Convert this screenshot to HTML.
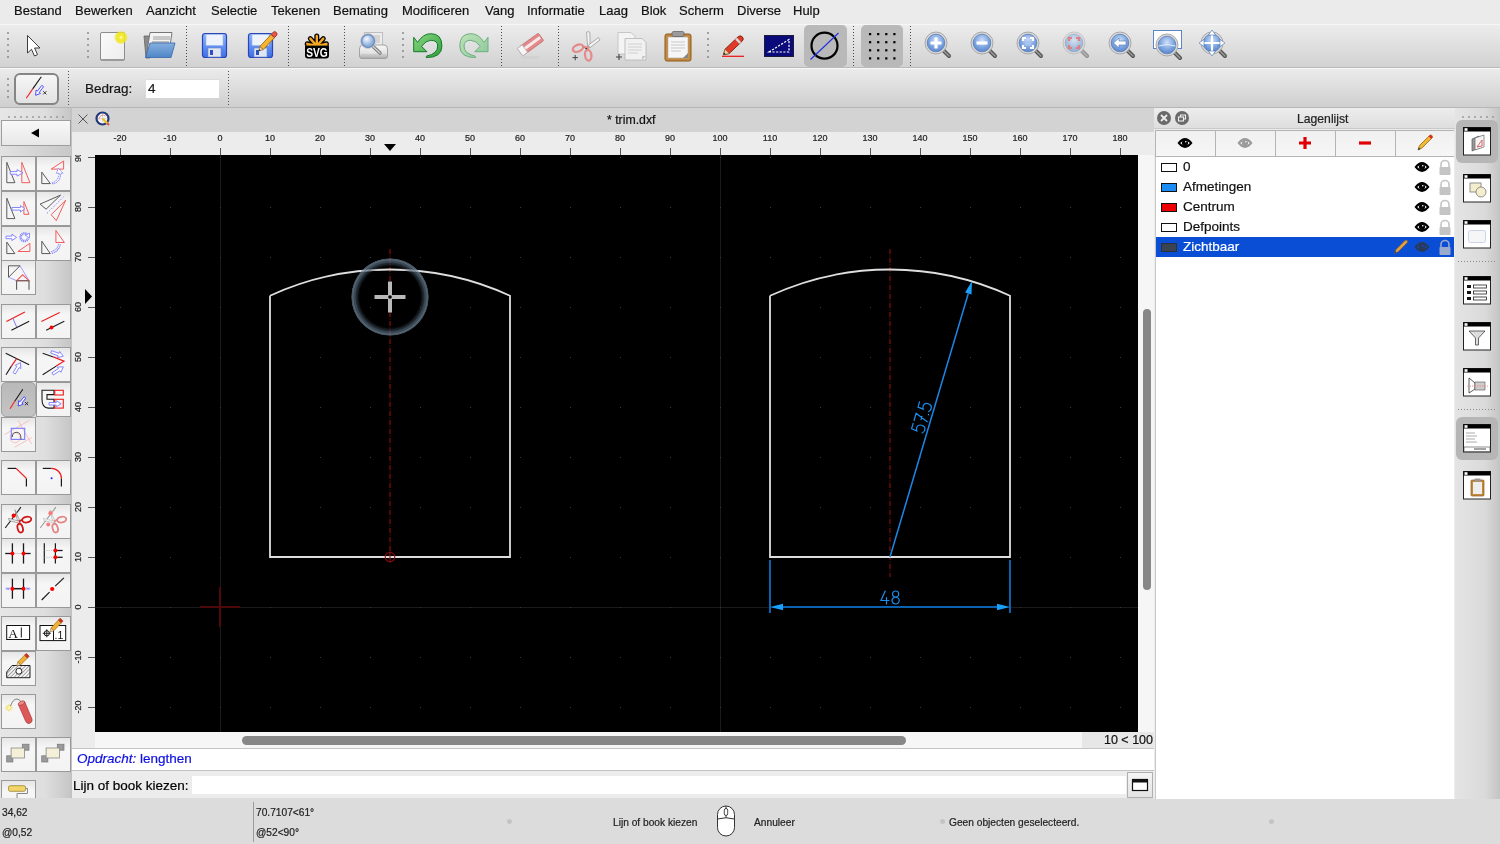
<!DOCTYPE html><html><head><meta charset="utf-8"><style>
*{box-sizing:border-box;margin:0;padding:0}
html,body{width:1500px;height:844px;overflow:hidden;background:#ececec;font-family:"Liberation Sans",sans-serif;color:#1a1a1a}
div,span{-webkit-text-stroke:0.2px currentColor}
.a{position:absolute}
.menu span{position:absolute;top:3px;font-size:13px;color:#111;white-space:nowrap}
.tb1{left:0;top:24px;width:1500px;height:44px;background:linear-gradient(#ececec,#d2d2d2);border-top:1px solid #f6f6f6;border-bottom:1px solid #b9b9b9}
.tb2{left:0;top:68px;width:1500px;height:40px;background:linear-gradient(#ebebeb,#cfcfcf);border-top:1px solid #f7f7f7;border-bottom:1px solid #b6b6b6}
.sep{position:absolute;width:2px;background-image:radial-gradient(circle,#7a7a7a 0.8px,transparent 1px);background-size:2px 4px}
.sepv{position:absolute;width:1px;border-left:1px dotted #555}
.lbtn{position:absolute;width:34px;height:34px;background:linear-gradient(#e6e6e6 0,#f6f6f6 30%,#f3f3f3 100%);border:1px solid #999}
.lbtn svg{position:absolute;left:0;top:0}
.rl{position:absolute;font-size:9px;color:#222;white-space:nowrap}
.lr{position:absolute;font-size:13.5px;color:#111;white-space:nowrap}
.st{position:absolute;font-size:10.2px;color:#222;white-space:nowrap}
</style></head><body><div id="root" style="position:absolute;left:0;top:0;width:1500px;height:844px;overflow:hidden;will-change:transform">
<div class="a menu" style="left:0;top:0;width:1500px;height:24px;background:#ebebeb">
<span style="left:14px">Bestand</span>
<span style="left:75px">Bewerken</span>
<span style="left:146px">Aanzicht</span>
<span style="left:211px">Selectie</span>
<span style="left:271px">Tekenen</span>
<span style="left:333px">Bemating</span>
<span style="left:402px">Modificeren</span>
<span style="left:485px">Vang</span>
<span style="left:527px">Informatie</span>
<span style="left:599px">Laag</span>
<span style="left:641px">Blok</span>
<span style="left:679px">Scherm</span>
<span style="left:737px">Diverse</span>
<span style="left:793px">Hulp</span>
</div>
<div class="a tb1"></div>
<div class="a tb2"></div>
<div class="a" style="left:7px;top:32px;width:2px;height:2px;border-radius:1px;background:#8a8a8a"></div>
<div class="a" style="left:7px;top:38px;width:2px;height:2px;border-radius:1px;background:#8a8a8a"></div>
<div class="a" style="left:7px;top:44px;width:2px;height:2px;border-radius:1px;background:#8a8a8a"></div>
<div class="a" style="left:7px;top:50px;width:2px;height:2px;border-radius:1px;background:#8a8a8a"></div>
<div class="a" style="left:7px;top:56px;width:2px;height:2px;border-radius:1px;background:#8a8a8a"></div>
<div class="a" style="left:87px;top:32px;width:2px;height:2px;border-radius:1px;background:#8a8a8a"></div>
<div class="a" style="left:87px;top:38px;width:2px;height:2px;border-radius:1px;background:#8a8a8a"></div>
<div class="a" style="left:87px;top:44px;width:2px;height:2px;border-radius:1px;background:#8a8a8a"></div>
<div class="a" style="left:87px;top:50px;width:2px;height:2px;border-radius:1px;background:#8a8a8a"></div>
<div class="a" style="left:87px;top:56px;width:2px;height:2px;border-radius:1px;background:#8a8a8a"></div>
<div class="a" style="left:186px;top:26px;width:1px;height:40px;background:repeating-linear-gradient(#4a4a4a 0 1px,transparent 1px 3px)"></div>
<div class="a" style="left:288px;top:26px;width:1px;height:40px;background:repeating-linear-gradient(#4a4a4a 0 1px,transparent 1px 3px)"></div>
<div class="a" style="left:344px;top:26px;width:1px;height:40px;background:repeating-linear-gradient(#4a4a4a 0 1px,transparent 1px 3px)"></div>
<div class="a" style="left:402px;top:32px;width:2px;height:2px;border-radius:1px;background:#8a8a8a"></div>
<div class="a" style="left:402px;top:38px;width:2px;height:2px;border-radius:1px;background:#8a8a8a"></div>
<div class="a" style="left:402px;top:44px;width:2px;height:2px;border-radius:1px;background:#8a8a8a"></div>
<div class="a" style="left:402px;top:50px;width:2px;height:2px;border-radius:1px;background:#8a8a8a"></div>
<div class="a" style="left:402px;top:56px;width:2px;height:2px;border-radius:1px;background:#8a8a8a"></div>
<div class="a" style="left:501px;top:26px;width:1px;height:40px;background:repeating-linear-gradient(#4a4a4a 0 1px,transparent 1px 3px)"></div>
<div class="a" style="left:558px;top:26px;width:1px;height:40px;background:repeating-linear-gradient(#4a4a4a 0 1px,transparent 1px 3px)"></div>
<div class="a" style="left:707px;top:32px;width:2px;height:2px;border-radius:1px;background:#8a8a8a"></div>
<div class="a" style="left:707px;top:38px;width:2px;height:2px;border-radius:1px;background:#8a8a8a"></div>
<div class="a" style="left:707px;top:44px;width:2px;height:2px;border-radius:1px;background:#8a8a8a"></div>
<div class="a" style="left:707px;top:50px;width:2px;height:2px;border-radius:1px;background:#8a8a8a"></div>
<div class="a" style="left:707px;top:56px;width:2px;height:2px;border-radius:1px;background:#8a8a8a"></div>
<div class="a" style="left:853px;top:26px;width:1px;height:40px;background:repeating-linear-gradient(#4a4a4a 0 1px,transparent 1px 3px)"></div>
<div class="a" style="left:910px;top:26px;width:1px;height:40px;background:repeating-linear-gradient(#4a4a4a 0 1px,transparent 1px 3px)"></div>
<div class="a" style="left:804px;top:25px;width:43px;height:42px;border-radius:5px;background:#b9b9b9"></div>
<div class="a" style="left:861px;top:25px;width:42px;height:42px;border-radius:5px;background:#b9b9b9"></div>
<svg class="a" style="left:21px;top:33px" width="24" height="26" viewBox="0 0 24 26"><path d="M6.5,2.5 L6.5,20 L10.5,16.3 L13.5,23 L16.5,21.6 L13.6,15 L19,15 Z" fill="#fff" stroke="#333" stroke-width="0.95" stroke-linejoin="miter"/></svg>
<svg class="a" style="left:98px;top:30px" width="30" height="32" viewBox="0 0 30 32"><defs><radialGradient id="glow"><stop offset="0" stop-color="#fffde0"/><stop offset="0.35" stop-color="#f4ea1c"/><stop offset="0.75" stop-color="#f1e520" stop-opacity="0.8"/><stop offset="1" stop-color="#f1e520" stop-opacity="0"/></radialGradient><linearGradient id="pg" x1="0" y1="0" x2="1" y2="1"><stop offset="0" stop-color="#fbfbfb"/><stop offset="1" stop-color="#ececec"/></linearGradient></defs><rect x="2.5" y="2.5" width="24" height="28" rx="1.5" fill="url(#pg)" stroke="#8c8c8c" stroke-width="1"/><rect x="3" y="29" width="23" height="2" fill="#9a9a9a"/><circle cx="23" cy="7.5" r="7" fill="url(#glow)"/></svg>
<svg class="a" style="left:141px;top:30px" width="36" height="32" viewBox="0 0 36 32"><defs><linearGradient id="fb" x1="0" y1="0" x2="0" y2="1"><stop offset="0" stop-color="#86b0de"/><stop offset="1" stop-color="#4f86c8"/></linearGradient></defs><path d="M3,6 L9,6 L9,28 L5,28 Z" fill="#8a8a8a" stroke="#666" stroke-width="0.8"/><path d="M9,2.5 L31,2.5 L29,16 L5,28 Z" fill="#f4f4f4" stroke="#777" stroke-width="1"/><rect x="12" y="6" width="17" height="4" fill="#c8c8c8"/><rect x="11" y="11" width="17" height="4" fill="#bdbdbd"/><path d="M9,13 L34,13 L30,27.5 L4.5,27.5 Z" fill="url(#fb)" stroke="#3f6fb0" stroke-width="0.9"/></svg>
<svg class="a" style="left:201px;top:32px" width="28" height="28" viewBox="0 0 28 28"><defs><linearGradient id="fl1" x1="0" y1="0" x2="0" y2="1"><stop offset="0" stop-color="#8fb7ff"/><stop offset="1" stop-color="#3d6fe8"/></linearGradient></defs><rect x="1.5" y="1.5" width="24" height="24" rx="2.5" fill="url(#fl1)" stroke="#2846b8" stroke-width="1.2"/><rect x="5" y="2.5" width="17" height="11" fill="#eef2fa"/><rect x="5" y="2.5" width="17" height="11" fill="none" stroke="#9bb4e4" stroke-width="0.6"/><rect x="7" y="16" width="13" height="9" fill="#dfe6f2" stroke="#6b86c4" stroke-width="0.6"/><rect x="9" y="18" width="3" height="5" fill="#2b50c0"/></svg>
<svg class="a" style="left:247px;top:30px" width="32" height="30" viewBox="0 0 32 30"><g transform="translate(0,2)"><defs><linearGradient id="fl2" x1="0" y1="0" x2="0" y2="1"><stop offset="0" stop-color="#8fb7ff"/><stop offset="1" stop-color="#3d6fe8"/></linearGradient></defs><rect x="1.5" y="1.5" width="24" height="24" rx="2.5" fill="url(#fl2)" stroke="#2846b8" stroke-width="1.2"/><rect x="5" y="2.5" width="17" height="11" fill="#eef2fa"/><rect x="5" y="2.5" width="17" height="11" fill="none" stroke="#9bb4e4" stroke-width="0.6"/><rect x="7" y="16" width="13" height="9" fill="#dfe6f2" stroke="#6b86c4" stroke-width="0.6"/><rect x="9" y="18" width="3" height="5" fill="#2b50c0"/></g><path d="M12.77,16.51 L24.13,4.47 L27.47,7.63 L16.11,19.67 Z" fill="#f6b431" stroke="#9a5a00" stroke-width="0.8"/><path d="M24.13,4.47 L26.53,1.92 Q28,1 29.4,2.6 Q30.6,4 29.87,5.08 L27.47,7.63 Z" fill="#e8564a" stroke="#9a2a1a" stroke-width="0.8"/><path d="M11.7,21 L12.77,16.51 L16.11,19.67 Z" fill="#f3dcb0" stroke="#7a5a30" stroke-width="0.6"/><path d="M11.7,21 L12.2,19 L13.9,20.4 Z" fill="#333"/></svg>
<svg class="a" style="left:302px;top:30px" width="30" height="30" viewBox="0 0 30 30"><g stroke-linecap="round"><g stroke="#000" stroke-width="5"><path d="M14.8,16 L14.8,6 M14.8,16 L8.3,8.6 M14.8,16 L21.3,8.6 M14.8,16 L5.2,13.8 M14.8,16 L24.4,13.8"/></g><g stroke="#f5a623" stroke-width="2.4"><path d="M14.8,16 L14.8,6 M14.8,16 L8.3,8.6 M14.8,16 L21.3,8.6 M14.8,16 L5.2,13.8 M14.8,16 L24.4,13.8"/></g></g><rect x="3" y="14" width="24" height="14.5" rx="3" fill="#000"/><rect x="4.5" y="14" width="21" height="1.6" fill="#f5a623"/><text transform="translate(15,27) scale(0.8,1)" font-family="Liberation Sans" font-weight="bold" font-size="12.8" fill="#fff" text-anchor="middle">SVG</text></svg>
<svg class="a" style="left:357px;top:30px" width="32" height="32" viewBox="0 0 32 32"><defs><linearGradient id="pr" x1="0" y1="0" x2="0" y2="1"><stop offset="0" stop-color="#f8f8f8"/><stop offset="0.6" stop-color="#e2e2e2"/><stop offset="1" stop-color="#a8a8a8"/></linearGradient><radialGradient id="lens" cx="0.4" cy="0.35"><stop offset="0" stop-color="#f4f8ff"/><stop offset="1" stop-color="#8fb0dc"/></radialGradient></defs><rect x="7.5" y="2.5" width="18" height="14" fill="#ececec" stroke="#b4b4b4" stroke-width="0.8"/><rect x="17" y="5" width="6" height="8" fill="#d4d4d4"/><path d="M2.5,19 Q2.5,15 6,15 L27,15 Q30.5,15 30.5,19 L30.5,26 Q30.5,28.5 28,28.5 L5,28.5 Q2.5,28.5 2.5,26 Z" fill="url(#pr)" stroke="#9c9c9c" stroke-width="0.9"/><rect x="4" y="24.5" width="25" height="1.2" fill="#c4c4c4"/><line x1="15" y1="15.5" x2="23" y2="23" stroke="#7a7a7a" stroke-width="3.4" stroke-linecap="round"/><line x1="15" y1="15.5" x2="23" y2="23" stroke="#d8d8d8" stroke-width="1.2" stroke-linecap="round"/><circle cx="11" cy="11" r="6.5" fill="url(#lens)" stroke="#6f8fc0" stroke-width="1.6"/><circle cx="11" cy="11" r="7.6" fill="none" stroke="#c8c8c8" stroke-width="0.8"/></svg>
<svg class="a" style="left:412px;top:30px" width="32" height="32" viewBox="0 0 32 32"><defs><linearGradient id="ug" x1="0" y1="0" x2="1" y2="1"><stop offset="0" stop-color="#8ad880"/><stop offset="1" stop-color="#2f9e3f"/></linearGradient></defs><path d="M1.7,7.3 L5.6,12.4 Q11,3.7 18.8,3.7 Q29.9,3.7 29.9,16 Q29.9,27.6 14.3,27.6 Q13.6,26.6 14.8,26 Q25.7,23.8 25.7,16 Q25.7,10.3 18.8,10.3 Q14,10.3 9.5,16.3 L14.9,21.7 L1.7,21.7 Z" fill="url(#ug)" stroke="#137a2a" stroke-width="1"/></svg>
<svg class="a" style="left:458px;top:30px" width="32" height="32" viewBox="0 0 32 32"><defs><linearGradient id="rg" x1="1" y1="0" x2="0" y2="1"><stop offset="0" stop-color="#bfe4b8"/><stop offset="1" stop-color="#8cc79a"/></linearGradient></defs><path transform="translate(31.7,0) scale(-1,1)" d="M1.7,7.3 L5.6,12.4 Q11,3.7 18.8,3.7 Q29.9,3.7 29.9,16 Q29.9,27.6 14.3,27.6 Q13.6,26.6 14.8,26 Q25.7,23.8 25.7,16 Q25.7,10.3 18.8,10.3 Q14,10.3 9.5,16.3 L14.9,21.7 L1.7,21.7 Z" fill="url(#rg)" stroke="#6cae80" stroke-width="1"/></svg>
<svg class="a" style="left:514px;top:30px" width="32" height="32" viewBox="0 0 32 32"><ellipse cx="16" cy="27.5" rx="10" ry="1.6" fill="#cfcfcf" opacity="0.7"/><g transform="translate(16.5,14.5) rotate(-36)"><rect x="-13" y="-4.6" width="26" height="9.2" rx="1" fill="#e58a8a" stroke="#c07070" stroke-width="0.8"/><rect x="-12" y="-1.6" width="24" height="3" fill="#f6eaea"/><rect x="-13" y="-4.6" width="6" height="9.2" fill="#f6f6f6" stroke="#b8b8b8" stroke-width="0.8"/></g></svg>
<svg class="a" style="left:568px;top:30px" width="34" height="32" viewBox="0 0 34 32"><path d="M18.6,2.2 Q20.2,1 21.8,2.2 L22.2,17 L19.6,17 Z" fill="#f4f4f4" stroke="#9a9a9a" stroke-width="0.8"/><path d="M20.5,15 L30.5,7.6 L32,10 L21.5,18 Z" fill="#f4f4f4" stroke="#9a9a9a" stroke-width="0.8"/><ellipse cx="10" cy="18.2" rx="5.4" ry="3.3" transform="rotate(-22 10 18.2)" fill="none" stroke="#e48a8a" stroke-width="2.3"/><ellipse cx="20.2" cy="25.2" rx="3.2" ry="5.4" transform="rotate(-8 20.2 25.2)" fill="none" stroke="#e48a8a" stroke-width="2.3"/><path d="M14.5,16.5 L20,17.5 L19.5,20" stroke="#e48a8a" stroke-width="2"/><path d="M4.5,27.6 h5.4 M7.2,24.9 v5.4" stroke="#444" stroke-width="1"/></svg>
<svg class="a" style="left:614px;top:30px" width="34" height="32" viewBox="0 0 34 32"><g><path d="M4,2.5 L17,2.5 L21,6.5 L21,24 L4,24 Z" fill="#f4f4f4" stroke="#bdbdbd" stroke-width="0.8"/><path d="M11,8.5 L28,8.5 L32,12.5 L32,30 L11,30 Z" fill="#f1f1f1" stroke="#b4b4b4" stroke-width="0.8"/><path d="M14,14 h14 M14,17 h14 M14,20 h14 M14,23 h10" stroke="#d0d0d0" stroke-width="1"/><path d="M28,30 L32,26 L28,26 Z" fill="#c8c8c8"/><path d="M2,27 h6 M5,24 v6" stroke="#444" stroke-width="1.1"/></g></svg>
<svg class="a" style="left:662px;top:30px" width="32" height="32" viewBox="0 0 32 32"><rect x="3" y="4" width="26" height="27" rx="2" fill="#c48a3e" stroke="#8a5a1e" stroke-width="1"/><rect x="6" y="7" width="20" height="21" fill="#f6f6f6" stroke="#aaa" stroke-width="0.6"/><path d="M9,12 h14 M9,15 h14 M9,18 h14 M9,21 h10" stroke="#c9c9c9" stroke-width="1"/><rect x="10" y="1.5" width="12" height="5" rx="1.5" fill="#9b9b9b" stroke="#666" stroke-width="0.8"/><path d="M21,28 L26,23 L26,28 Z" fill="#888"/></svg>
<svg class="a" style="left:718px;top:30px" width="30" height="32" viewBox="0 0 30 32"><line x1="4" y1="26.3" x2="26" y2="26.3" stroke="#f01010" stroke-width="1.2"/><g transform="translate(5.5,24.8) rotate(-43.6)"><path d="M0,0 L5,-3 L23,-3 Q26,-3 26,0 Q26,3 23,3 L5,3 Z" fill="#e23a28" stroke="#7a2a10" stroke-width="0.9"/><rect x="19" y="-3" width="2.5" height="6" fill="#d8d8d8"/><path d="M0,0 L5,-3 L5,3 Z" fill="#f0d8a8" stroke="#7a5a30" stroke-width="0.6"/><path d="M0,0 L2,-1.2 L2,1.2 Z" fill="#222"/></g></svg>
<svg class="a" style="left:763px;top:30px" width="32" height="32" viewBox="0 0 32 32"><rect x="1.5" y="5.5" width="29" height="21" fill="#0a0a7a" stroke="#1c1c3c" stroke-width="1"/><path d="M6,22 L26,9.5 L26,22 Z" fill="none" stroke="#fff" stroke-width="1.2" stroke-dasharray="2.2,1.4"/></svg>
<svg class="a" style="left:808px;top:30px" width="34" height="32" viewBox="0 0 34 32"><circle cx="16.5" cy="15.7" r="13" fill="none" stroke="#000" stroke-width="2.2"/><line x1="2.5" y1="29.5" x2="30.5" y2="3" stroke="#2030e0" stroke-width="1.1"/></svg>
<svg class="a" style="left:865px;top:30px" width="34" height="32" viewBox="0 0 34 32"><rect x="4.0" y="3.0" width="2.2" height="2.2" fill="#000"/><rect x="4.0" y="11.1" width="2.2" height="2.2" fill="#000"/><rect x="4.0" y="19.2" width="2.2" height="2.2" fill="#000"/><rect x="4.0" y="27.3" width="2.2" height="2.2" fill="#000"/><rect x="12.1" y="3.0" width="2.2" height="2.2" fill="#000"/><rect x="12.1" y="11.1" width="2.2" height="2.2" fill="#000"/><rect x="12.1" y="19.2" width="2.2" height="2.2" fill="#000"/><rect x="12.1" y="27.3" width="2.2" height="2.2" fill="#000"/><rect x="20.2" y="3.0" width="2.2" height="2.2" fill="#000"/><rect x="20.2" y="11.1" width="2.2" height="2.2" fill="#000"/><rect x="20.2" y="19.2" width="2.2" height="2.2" fill="#000"/><rect x="20.2" y="27.3" width="2.2" height="2.2" fill="#000"/><rect x="28.3" y="3.0" width="2.2" height="2.2" fill="#000"/><rect x="28.3" y="11.1" width="2.2" height="2.2" fill="#000"/><rect x="28.3" y="19.2" width="2.2" height="2.2" fill="#000"/><rect x="28.3" y="27.3" width="2.2" height="2.2" fill="#000"/></svg>
<svg class="a" style="left:923px;top:30px" width="30" height="30" viewBox="0 0 30 30"><defs><radialGradient id="mg" cx="0.5" cy="0.35" r="0.65"><stop offset="0" stop-color="#cfe0f8"/><stop offset="0.6" stop-color="#7fa6e0"/><stop offset="1" stop-color="#5a86cc"/></radialGradient></defs><g><line x1="19" y1="19" x2="26" y2="26" stroke="#555" stroke-width="4" stroke-linecap="round"/><line x1="19" y1="19" x2="26" y2="26" stroke="#9a9a9a" stroke-width="1.5" stroke-linecap="round"/><circle cx="13" cy="13" r="11" fill="#d8d8d8" stroke="#a8a8a8" stroke-width="1"/><circle cx="13" cy="13" r="8.8" fill="url(#mg)" stroke="#5b7fb8" stroke-width="0.8"/><path d="M13,7.5 v11 M7.5,13 h11" stroke="#fff" stroke-width="3.2"/></g></svg>
<svg class="a" style="left:969px;top:30px" width="30" height="30" viewBox="0 0 30 30"><defs><radialGradient id="mg" cx="0.5" cy="0.35" r="0.65"><stop offset="0" stop-color="#cfe0f8"/><stop offset="0.6" stop-color="#7fa6e0"/><stop offset="1" stop-color="#5a86cc"/></radialGradient></defs><g><line x1="19" y1="19" x2="26" y2="26" stroke="#555" stroke-width="4" stroke-linecap="round"/><line x1="19" y1="19" x2="26" y2="26" stroke="#9a9a9a" stroke-width="1.5" stroke-linecap="round"/><circle cx="13" cy="13" r="11" fill="#d8d8d8" stroke="#a8a8a8" stroke-width="1"/><circle cx="13" cy="13" r="8.8" fill="url(#mg)" stroke="#5b7fb8" stroke-width="0.8"/><path d="M7.5,13 h11" stroke="#fff" stroke-width="3.2"/></g></svg>
<svg class="a" style="left:1015px;top:30px" width="30" height="30" viewBox="0 0 30 30"><defs><radialGradient id="mg" cx="0.5" cy="0.35" r="0.65"><stop offset="0" stop-color="#cfe0f8"/><stop offset="0.6" stop-color="#7fa6e0"/><stop offset="1" stop-color="#5a86cc"/></radialGradient></defs><g><line x1="19" y1="19" x2="26" y2="26" stroke="#555" stroke-width="4" stroke-linecap="round"/><line x1="19" y1="19" x2="26" y2="26" stroke="#9a9a9a" stroke-width="1.5" stroke-linecap="round"/><circle cx="13" cy="13" r="11" fill="#d8d8d8" stroke="#a8a8a8" stroke-width="1"/><circle cx="13" cy="13" r="8.8" fill="url(#mg)" stroke="#5b7fb8" stroke-width="0.8"/><path d="M8,11 v-3 h3 M15,8 h3 v3 M18,15 v3 h-3 M11,18 h-3 v-3" stroke="#fff" stroke-width="2.2" fill="none"/><rect x="10.5" y="10.5" width="5" height="5" fill="#a8c4ee"/></g></svg>
<svg class="a" style="left:1061px;top:30px" width="30" height="30" viewBox="0 0 30 30"><defs><radialGradient id="mg" cx="0.5" cy="0.35" r="0.65"><stop offset="0" stop-color="#cfe0f8"/><stop offset="0.6" stop-color="#7fa6e0"/><stop offset="1" stop-color="#5a86cc"/></radialGradient></defs><g opacity="0.55"><line x1="19" y1="19" x2="26" y2="26" stroke="#555" stroke-width="4" stroke-linecap="round"/><line x1="19" y1="19" x2="26" y2="26" stroke="#9a9a9a" stroke-width="1.5" stroke-linecap="round"/><circle cx="13" cy="13" r="11" fill="#d8d8d8" stroke="#a8a8a8" stroke-width="1"/><circle cx="13" cy="13" r="8.8" fill="url(#mg)" stroke="#5b7fb8" stroke-width="0.8"/><path d="M8,11 v-3 h3 M15,8 h3 v3 M18,15 v3 h-3 M11,18 h-3 v-3" stroke="#e03030" stroke-width="2.2" fill="none"/></g></svg>
<svg class="a" style="left:1107px;top:30px" width="30" height="30" viewBox="0 0 30 30"><defs><radialGradient id="mg" cx="0.5" cy="0.35" r="0.65"><stop offset="0" stop-color="#cfe0f8"/><stop offset="0.6" stop-color="#7fa6e0"/><stop offset="1" stop-color="#5a86cc"/></radialGradient></defs><g><line x1="19" y1="19" x2="26" y2="26" stroke="#555" stroke-width="4" stroke-linecap="round"/><line x1="19" y1="19" x2="26" y2="26" stroke="#9a9a9a" stroke-width="1.5" stroke-linecap="round"/><circle cx="13" cy="13" r="11" fill="#d8d8d8" stroke="#a8a8a8" stroke-width="1"/><circle cx="13" cy="13" r="8.8" fill="url(#mg)" stroke="#5b7fb8" stroke-width="0.8"/><path d="M6.5,13 L12,8 L12,11 L19,11 L19,15 L12,15 L12,18 Z" fill="#fff" stroke="#4a72b0" stroke-width="0.6"/></g></svg>
<svg class="a" style="left:1151px;top:28px" width="34" height="32" viewBox="0 0 34 32"><rect x="2.5" y="2.5" width="28" height="18" fill="#fff" stroke="#5a86cc" stroke-width="1"/><g transform="translate(3,4)"><defs><radialGradient id="mg" cx="0.5" cy="0.35" r="0.65"><stop offset="0" stop-color="#cfe0f8"/><stop offset="0.6" stop-color="#7fa6e0"/><stop offset="1" stop-color="#5a86cc"/></radialGradient></defs><g><line x1="19" y1="19" x2="26" y2="26" stroke="#555" stroke-width="4" stroke-linecap="round"/><line x1="19" y1="19" x2="26" y2="26" stroke="#9a9a9a" stroke-width="1.5" stroke-linecap="round"/><circle cx="13" cy="13" r="11" fill="#d8d8d8" stroke="#a8a8a8" stroke-width="1"/><circle cx="13" cy="13" r="8.8" fill="url(#mg)" stroke="#5b7fb8" stroke-width="0.8"/><path d="M4.5,14 Q13,11 21.5,14" stroke="#e0ecff" stroke-width="1" fill="none"/></g></g></svg>
<svg class="a" style="left:1197px;top:28px" width="32" height="32" viewBox="0 0 32 32"><g transform="translate(2,2)"><defs><radialGradient id="mg" cx="0.5" cy="0.35" r="0.65"><stop offset="0" stop-color="#cfe0f8"/><stop offset="0.6" stop-color="#7fa6e0"/><stop offset="1" stop-color="#5a86cc"/></radialGradient></defs><g><line x1="19" y1="19" x2="26" y2="26" stroke="#555" stroke-width="4" stroke-linecap="round"/><line x1="19" y1="19" x2="26" y2="26" stroke="#9a9a9a" stroke-width="1.5" stroke-linecap="round"/><circle cx="13" cy="13" r="11" fill="#d8d8d8" stroke="#a8a8a8" stroke-width="1"/><circle cx="13" cy="13" r="8.8" fill="url(#mg)" stroke="#5b7fb8" stroke-width="0.8"/><path d="M13,2.5 v21 M2.5,13 h21" stroke="#fff" stroke-width="2.2"/><path d="M13,0 L9.5,5 L16.5,5 Z M13,26 L9.5,21 L16.5,21 Z M0,13 L5,9.5 L5,16.5 Z M26,13 L21,9.5 L21,16.5 Z" fill="#fff" stroke="#4a72b0" stroke-width="0.6"/></g></g></svg>
<div class="a" style="left:7px;top:78px;width:2px;height:2px;border-radius:1px;background:#8a8a8a"></div>
<div class="a" style="left:7px;top:84px;width:2px;height:2px;border-radius:1px;background:#8a8a8a"></div>
<div class="a" style="left:7px;top:90px;width:2px;height:2px;border-radius:1px;background:#8a8a8a"></div>
<div class="a" style="left:7px;top:96px;width:2px;height:2px;border-radius:1px;background:#8a8a8a"></div>
<div class="a" style="left:14px;top:73px;width:45px;height:32px;border-radius:6px;border:2px solid #858585;background:linear-gradient(#f6f6f6,#e2e2e2)"></div>
<svg class="a" style="left:14px;top:73px" width="45" height="32" viewBox="0 0 45 32"><line x1="27.3" y1="3.8" x2="18.7" y2="15.9" stroke="#111" stroke-width="1.1"/><line x1="18.7" y1="15.9" x2="12.3" y2="25.2" stroke="#ff1a1a" stroke-width="1.1"/><path d="M27.83,12.33 L23.46,18.06 L22.11,17.02 L21.60,22.30 L26.56,20.42 L25.20,19.39 L29.57,13.67 Z" fill="#fff" stroke="#3a3aff" stroke-width="0.9"/><path d="M29.2,18.2 l3.2,3.2 M32.4,18.2 l-3.2,3.2" stroke="#222" stroke-width="0.9"/></svg>
<div class="a" style="left:68px;top:71px;width:1px;height:35px;background:repeating-linear-gradient(#555 0 1px,transparent 1px 3px)"></div>
<div class="a" style="left:85px;top:81px;font-size:13.5px;color:#151515">Bedrag:</div>
<div class="a" style="left:146px;top:79px;width:73px;height:19px;background:#fff;border-top:1px solid #dcdcdc"></div>
<div class="a" style="left:148px;top:81px;font-size:13.5px;color:#151515">4</div>
<div class="a" style="left:228px;top:71px;width:1px;height:35px;background:repeating-linear-gradient(#555 0 1px,transparent 1px 3px)"></div>
<div class="a" style="left:0;top:108px;width:71px;height:691px;background:linear-gradient(90deg,#e6e6e6 0,#dedede 45px,#c6c6c6 71px)"></div>
<div class="a" style="left:70px;top:108px;width:2px;height:691px;background:#c2c2c2"></div>
<div class="a" style="left:8px;top:116px;width:2px;height:2px;border-radius:1px;background:#9a9a9a"></div>
<div class="a" style="left:14px;top:116px;width:2px;height:2px;border-radius:1px;background:#9a9a9a"></div>
<div class="a" style="left:20px;top:116px;width:2px;height:2px;border-radius:1px;background:#9a9a9a"></div>
<div class="a" style="left:26px;top:116px;width:2px;height:2px;border-radius:1px;background:#9a9a9a"></div>
<div class="a" style="left:32px;top:116px;width:2px;height:2px;border-radius:1px;background:#9a9a9a"></div>
<div class="a" style="left:38px;top:116px;width:2px;height:2px;border-radius:1px;background:#9a9a9a"></div>
<div class="a" style="left:44px;top:116px;width:2px;height:2px;border-radius:1px;background:#9a9a9a"></div>
<div class="a" style="left:50px;top:116px;width:2px;height:2px;border-radius:1px;background:#9a9a9a"></div>
<div class="a" style="left:56px;top:116px;width:2px;height:2px;border-radius:1px;background:#9a9a9a"></div>
<div class="a" style="left:62px;top:116px;width:2px;height:2px;border-radius:1px;background:#9a9a9a"></div>
<div class="a" style="left:1px;top:120px;width:70px;height:26px;border:1px solid #9e9e9e;background:linear-gradient(#f8f8f8,#e8e8e8)"></div>
<svg class="a" style="left:28px;top:126px" width="14" height="14" viewBox="0 0 14 14"><path d="M3,7 L11,2.5 L11,11.5 Z" fill="#000"/></svg>
<div class="a" style="left:0;top:146px;width:71px;height:10px;background:linear-gradient(90deg,#e2e2e2,#c8c8c8)"></div>
<div class="lbtn" style="left:1px;top:156px;width:35px;height:35px;"><svg width="34" height="34" viewBox="0 0 34 34"><path d="M4.8,5.3 4.8,25.7 12.9,25.7Z" fill="none" stroke="#5a5a5a" stroke-width="1.0" stroke-linejoin="miter"/><path d="M19.8,5.3 19.8,25.7 27.9,25.7Z" fill="none" stroke="#f25c5c" stroke-width="1.0" stroke-linejoin="miter"/><path d="M8.2,14.6 L15,14.6 L15,12.7 L21,15.9 L15,19.1 L15,17.2 L8.2,17.2 Z" fill="#fff" stroke="#7a7aff" stroke-width="0.9"/></svg></div>
<div class="lbtn" style="left:36px;top:156px;width:35px;height:35px;"><svg width="34" height="34" viewBox="0 0 34 34"><path d="M4.8,15.1 4.8,26.6 13.3,26.6Z" fill="none" stroke="#5a5a5a" stroke-width="1.0" stroke-linejoin="miter"/><path d="M14.2,12.1 26.6,4 26.6,12.1Z" fill="none" stroke="#f25c5c" stroke-width="1.0" stroke-linejoin="miter"/><path d="M15,25.8 Q21,24.5 22.5,16.3 L19.5,16.3 L21.4,11.2 L26,16.3 L23.8,16.3 Q23,26.5 15,26.8 Z" fill="#fff" stroke="#7a7aff" stroke-width="0.9" stroke-dasharray="1.6,0.6"/></svg></div>
<div class="lbtn" style="left:1px;top:191px;width:35px;height:35px;"><svg width="34" height="34" viewBox="0 0 34 34"><path d="M4.8,6.1 4.8,26.6 12.9,26.6Z" fill="none" stroke="#5a5a5a" stroke-width="1.0" stroke-linejoin="miter"/><path d="M21.9,9.5 21.9,22.3 27,22.3Z" fill="none" stroke="#f25c5c" stroke-width="1.0" stroke-linejoin="miter"/><path d="M9.9,15.5 L18.5,15.5 L18.5,13.600000000000001 L22.7,16.8 L18.5,20.0 L18.5,18.1 L9.9,18.1 Z" fill="#fff" stroke="#7a7aff" stroke-width="0.9"/></svg></div>
<div class="lbtn" style="left:36px;top:191px;width:35px;height:35px;"><svg width="34" height="34" viewBox="0 0 34 34"><path d="M3.1,12.1 23.6,3.1 9.1,17.2Z" fill="none" stroke="#5a5a5a" stroke-width="1.0" stroke-linejoin="miter"/><path d="M28.7,8.2 14.2,22.7 19.3,28.7Z" fill="none" stroke="#f25c5c" stroke-width="1.0" stroke-linejoin="miter"/><line x1="9.9" y1="21.4" x2="26.6" y2="4.8" stroke="#7a7aff" stroke-width="0.9" stroke-dasharray="1.6,1.6"/></svg></div>
<div class="lbtn" style="left:1px;top:226px;width:35px;height:35px;"><svg width="34" height="34" viewBox="0 0 34 34"><path d="M4,9.1 L9.9,9.1 L9.9,7.2 L14.6,10.4 L9.9,13.600000000000001 L9.9,11.700000000000001 L4,11.700000000000001 Z" fill="#fff" stroke="#7a7aff" stroke-width="0.9"/><path d="M25.5,8 A3.8,3.8 0 1 0 26,11.5" fill="none" stroke="#7a7aff" stroke-width="2.6" stroke-dasharray="1,0.7"/><path d="M23.5,8.5 L27.5,6 L27.5,11 Z" fill="#fff" stroke="#7a7aff" stroke-width="0.8"/><path d="M4.8,15.1 4.8,26.6 12.9,26.6Z" fill="none" stroke="#5a5a5a" stroke-width="1.0" stroke-linejoin="miter"/><path d="M15.9,24.5 27.9,16.3 27.9,24.5Z" fill="none" stroke="#f25c5c" stroke-width="1.0" stroke-linejoin="miter"/></svg></div>
<div class="lbtn" style="left:36px;top:226px;width:35px;height:35px;"><svg width="34" height="34" viewBox="0 0 34 34"><path d="M4.8,14.2 4.8,26.6 13.3,26.6Z" fill="none" stroke="#5a5a5a" stroke-width="1.0" stroke-linejoin="miter"/><path d="M18.9,3.5 18.9,15.5 27.4,15.5Z" fill="none" stroke="#f25c5c" stroke-width="1.0" stroke-linejoin="miter"/><path d="M14.6,25.5 Q21.5,23.5 22.5,17.2" fill="none" stroke="#7a7aff" stroke-width="2.8" stroke-dasharray="1.2,0.6"/><path d="M14.6,25.5 Q21.5,23.5 22.5,17.2" fill="none" stroke="#f4f4f4" stroke-width="1"/></svg></div>
<div class="lbtn" style="left:1px;top:260px;width:35px;height:35px;"><svg width="34" height="34" viewBox="0 0 34 34"><path d="M18,4.8 L6.5,4.8 L6.5,16.3 Z" fill="none" stroke="#5a5a5a" stroke-width="1"/><path d="M6.5,16.3 L14.6,19.7 M18,4.8 L27,19.7" stroke="#7a7aff" stroke-width="0.7"/><path d="M14.6,19.7 L20.6,13.8 L27,19.7 Z" fill="none" stroke="#f25c5c" stroke-width="1.1"/><path d="M14.6,19.7 L27,19.7 M14.6,19.7 L14.6,28.7 M27,19.7 L27,28.7" stroke="#5a5a5a" stroke-width="1.1"/></svg></div>
<div class="lbtn" style="left:1px;top:304px;width:35px;height:35px;"><svg width="34" height="34" viewBox="0 0 34 34"><line x1="4.4" y1="16.6" x2="22.9" y2="7.1" stroke="#ee1c1c" stroke-width="1.1"/><line x1="9.4" y1="25.3" x2="27.2" y2="16.3" stroke="#1a1a1a" stroke-width="1.1"/><line x1="10.8" y1="13.2" x2="14.8" y2="22.3" stroke="#5a5af0" stroke-width="0.8"/></svg></div>
<div class="lbtn" style="left:36px;top:304px;width:35px;height:35px;"><svg width="34" height="34" viewBox="0 0 34 34"><line x1="4.3" y1="16.6" x2="22.7" y2="7.5" stroke="#ee1c1c" stroke-width="1.1"/><line x1="9.2" y1="25.3" x2="27.3" y2="16.3" stroke="#1a1a1a" stroke-width="1.1"/><circle cx="14.5" cy="22.5" r="1.9" fill="#f00"/></svg></div>
<div class="lbtn" style="left:1px;top:347px;width:35px;height:35px;"><svg width="34" height="34" viewBox="0 0 34 34"><line x1="3.7" y1="5.3" x2="27.2" y2="16.7" stroke="#1a1a1a" stroke-width="1.1"/><line x1="4" y1="26.7" x2="9.4" y2="18.1" stroke="#1a1a1a" stroke-width="1.1"/><line x1="9.4" y1="18.1" x2="14.8" y2="10.3" stroke="#ee1c1c" stroke-width="1.2"/><path d="M13.32,25.97 L17.15,19.56 L18.78,20.53 L18.60,14.60 L13.29,17.25 L14.92,18.22 L11.08,24.63 Z" fill="#fff" stroke="#7a7aff" stroke-width="0.9"/></svg></div>
<div class="lbtn" style="left:36px;top:347px;width:35px;height:35px;"><svg width="34" height="34" viewBox="0 0 34 34"><path d="M5.7,5.3 L16.3,8.9" stroke="#1a1a1a" stroke-width="1.1"/><path d="M16.3,8.9 L27,13.2 L19.2,18.1" fill="none" stroke="#ee1c1c" stroke-width="1.2"/><path d="M19.2,18.1 L5.7,26.7" stroke="#1a1a1a" stroke-width="1.1"/><path d="M13.76,5.12 L21.15,7.75 L20.52,9.54 L26.30,8.20 L22.66,3.51 L22.02,5.30 L14.64,2.68 Z" fill="#fff" stroke="#7a7aff" stroke-width="0.9"/><path d="M16.32,27.08 L22.85,22.75 L23.90,24.33 L26.30,18.90 L20.36,19.00 L21.41,20.58 L14.88,24.92 Z" fill="#fff" stroke="#7a7aff" stroke-width="0.9"/></svg></div>
<div class="lbtn" style="left:1px;top:382px;width:35px;height:35px;background:linear-gradient(#b9b9b9,#c4c4c4);border-color:#a0a0a0;border-radius:5px;"><svg width="34" height="34" viewBox="0 0 34 34"><line x1="20.8" y1="6.3" x2="12.9" y2="18" stroke="#1a1a1a" stroke-width="1.1"/><line x1="12.9" y1="18" x2="8" y2="25.8" stroke="#ff1a1a" stroke-width="1.1"/><path d="M22.03,13.72 L18.10,18.77 L16.76,17.73 L16.20,23.00 L21.17,21.17 L19.83,20.13 L23.77,15.08 Z" fill="#fff" stroke="#3a3aff" stroke-width="0.9"/><path d="M23,19 l3.2,3.2 M26.2,19 l-3.2,3.2" stroke="#222" stroke-width="0.9"/></svg></div>
<div class="lbtn" style="left:36px;top:382px;width:35px;height:35px;"><svg width="34" height="34" viewBox="0 0 34 34"><path d="M17,7.3 L5,7.3 L5,16.6 Q5,25.1 11.4,25.1 L17,25.1 L17,16.3 L10,16.3 L10,11.6 L17,11.6 Z" fill="none" stroke="#1a1a1a" stroke-width="1.1"/><rect x="17.8" y="7.3" width="8.5" height="4.7" fill="none" stroke="#ee1c1c" stroke-width="1.1"/><rect x="17.8" y="16.3" width="8.5" height="8.8" fill="none" stroke="#ee1c1c" stroke-width="1.1"/><path d="M12.00,22.00 L19.20,22.00 L19.20,23.80 L24.20,20.80 L19.20,17.80 L19.20,19.60 L12.00,19.60 Z" fill="#fff" stroke="#7a7aff" stroke-width="0.9"/></svg></div>
<div class="lbtn" style="left:1px;top:417px;width:35px;height:35px;"><svg width="34" height="34" viewBox="0 0 34 34"><g stroke="#f6b4b4" stroke-width="0.8" fill="none"><line x1="2.5" y1="16.6" x2="27.2" y2="2.5"/><line x1="16.1" y1="2.5" x2="29.7" y2="26.2"/><line x1="12.6" y1="29.2" x2="29.7" y2="19.7"/><circle cx="13.1" cy="19.7" r="5"/></g><rect x="9.3" y="10.3" width="13.4" height="11.1" fill="none" stroke="#7a7aff" stroke-width="1.1"/><path d="M10.3,19 Q10.3,14.3 14.8,14.3 Q19,14.3 19,21.4" fill="none" stroke="#555" stroke-width="1"/></svg></div>
<div class="lbtn" style="left:1px;top:460px;width:35px;height:35px;"><svg width="34" height="34" viewBox="0 0 34 34"><path d="M5.6,7.4 L14.1,7.4" stroke="#1a1a1a" stroke-width="1.2"/><path d="M14.1,7.4 L24.4,17.4" stroke="#ee1c1c" stroke-width="1.3"/><path d="M24.4,17.4 L24.4,25.5" stroke="#1a1a1a" stroke-width="1.2"/></svg></div>
<div class="lbtn" style="left:36px;top:460px;width:35px;height:35px;"><svg width="34" height="34" viewBox="0 0 34 34"><path d="M5.8,7.4 L14.4,7.4" stroke="#1a1a1a" stroke-width="1.2"/><path d="M14.4,7.4 A10,10 0 0 1 24.4,17.4" fill="none" stroke="#ee1c1c" stroke-width="1.3"/><path d="M24.4,17.4 L24.4,25.5" stroke="#1a1a1a" stroke-width="1.2"/><circle cx="14.6" cy="17.2" r="1" fill="#2020ff"/></svg></div>
<div class="lbtn" style="left:1px;top:504px;width:35px;height:35px;"><svg width="34" height="34" viewBox="0 0 34 34"><g opacity="1"><line x1="3.2" y1="23" x2="18.9" y2="2.2" stroke="#1a1a1a" stroke-width="1.1"/><path d="M13,4.8 L17.6,15.2 L15.5,16 Z" fill="#e8e8e8" stroke="#888" stroke-width="0.7"/><path d="M6.5,13.3 L18.2,16.5 L18.8,18.6 L7,15.5 Z" fill="#f2f2f2" stroke="#888" stroke-width="0.7"/><ellipse cx="24.7" cy="14.6" rx="4.6" ry="2.8" fill="none" stroke="#d01818" stroke-width="1.8" transform="rotate(-10 24.7 14.6)"/><ellipse cx="18.2" cy="23.2" rx="2.6" ry="4.4" fill="none" stroke="#d01818" stroke-width="1.8" transform="rotate(-15 18.2 23.2)"/><path d="M17,16.5 L20.5,14.5 M17,17.5 L18,19" stroke="#d01818" stroke-width="1.5"/><circle cx="11.7" cy="10.7" r="2.1" fill="#f00"/></g></svg></div>
<div class="lbtn" style="left:36px;top:504px;width:35px;height:35px;"><svg width="34" height="34" viewBox="0 0 34 34"><g opacity="0.5"><line x1="3.2" y1="23" x2="18.9" y2="2.2" stroke="#444" stroke-width="1.1"/><path d="M13,4.8 L17.6,15.2 L15.5,16 Z" fill="#e8e8e8" stroke="#888" stroke-width="0.7"/><path d="M6.5,13.3 L18.2,16.5 L18.8,18.6 L7,15.5 Z" fill="#f2f2f2" stroke="#888" stroke-width="0.7"/><ellipse cx="24.7" cy="14.6" rx="4.6" ry="2.8" fill="none" stroke="#d01818" stroke-width="1.8" transform="rotate(-10 24.7 14.6)"/><ellipse cx="18.2" cy="23.2" rx="2.6" ry="4.4" fill="none" stroke="#d01818" stroke-width="1.8" transform="rotate(-15 18.2 23.2)"/><path d="M17,16.5 L20.5,14.5 M17,17.5 L18,19" stroke="#d01818" stroke-width="1.5"/><circle cx="11.2" cy="19.5" r="2" fill="#f00"/><circle cx="13.5" cy="8.2" r="2.1" fill="#f00"/></g></svg></div>
<div class="lbtn" style="left:1px;top:538px;width:35px;height:35px;"><svg width="34" height="34" viewBox="0 0 34 34"><line x1="10.4" y1="4.3" x2="10.4" y2="24.6" stroke="#1a1a1a" stroke-width="1.3"/><line x1="21.5" y1="4.3" x2="21.5" y2="24.6" stroke="#1a1a1a" stroke-width="1.3"/><line x1="3.2" y1="14.5" x2="10.4" y2="14.5" stroke="#1a1a1a" stroke-width="1.3"/><line x1="21.5" y1="14.5" x2="28.6" y2="14.5" stroke="#1a1a1a" stroke-width="1.3"/><line x1="10.4" y1="14.5" x2="21.5" y2="14.5" stroke="#bbb" stroke-width="0.6"/><circle cx="10.4" cy="14.5" r="2" fill="#f00"/><circle cx="21.5" cy="14.5" r="2" fill="#f00"/></svg></div>
<div class="lbtn" style="left:36px;top:538px;width:35px;height:35px;"><svg width="34" height="34" viewBox="0 0 34 34"><line x1="7.3" y1="4.3" x2="7.3" y2="24.6" stroke="#1a1a1a" stroke-width="1.2"/><line x1="18.4" y1="4.3" x2="18.4" y2="24.6" stroke="#1a1a1a" stroke-width="1.2"/><line x1="18.4" y1="11.5" x2="25.6" y2="11.5" stroke="#1a1a1a" stroke-width="1.3"/><line x1="18.4" y1="18.3" x2="25.6" y2="18.3" stroke="#1a1a1a" stroke-width="1.3"/><path d="M7.3,11.5 H18.4 M7.3,18.3 H18.4" stroke="#aaa" stroke-width="0.6" stroke-dasharray="1.2,1"/><circle cx="18.4" cy="11.5" r="2" fill="#f00"/><circle cx="18.4" cy="18.3" r="2" fill="#f00"/></svg></div>
<div class="lbtn" style="left:1px;top:573px;width:35px;height:35px;"><svg width="34" height="34" viewBox="0 0 34 34"><line x1="10.4" y1="4.6" x2="10.4" y2="24.8" stroke="#1a1a1a" stroke-width="1.3"/><line x1="21.5" y1="4.6" x2="21.5" y2="24.8" stroke="#1a1a1a" stroke-width="1.3"/><line x1="10.4" y1="14.7" x2="21.5" y2="14.7" stroke="#1a1a1a" stroke-width="1.5"/><path d="M4.5,13.3 l2.6,2.8 M7.1,13.3 l-2.6,2.8 M24.7,13.3 l2.6,2.8 M27.3,13.3 l-2.6,2.8 M3.5,14.7 h5 M23.5,14.7 h5" stroke="#7a7aff" stroke-width="0.7"/><circle cx="10.4" cy="14.7" r="2" fill="#f00"/><circle cx="21.5" cy="14.7" r="2" fill="#f00"/></svg></div>
<div class="lbtn" style="left:36px;top:573px;width:35px;height:35px;"><svg width="34" height="34" viewBox="0 0 34 34"><line x1="4.7" y1="26" x2="12.5" y2="18.2" stroke="#1a1a1a" stroke-width="1.2"/><line x1="18.2" y1="12.1" x2="26.9" y2="3.9" stroke="#1a1a1a" stroke-width="1.2"/><circle cx="15.2" cy="15" r="2.1" fill="#f00"/></svg></div>
<div class="lbtn" style="left:1px;top:616px;width:35px;height:35px;"><svg width="34" height="34" viewBox="0 0 34 34"><rect x="4.7" y="8.5" width="22.9" height="14" fill="#fff" stroke="#111" stroke-width="1"/><text x="6.3" y="20.5" font-family="Liberation Serif" font-size="13.5" fill="#111">A</text><line x1="19.3" y1="10.5" x2="19.3" y2="20.5" stroke="#111" stroke-width="1"/></svg></div>
<div class="lbtn" style="left:36px;top:616px;width:35px;height:35px;"><svg width="34" height="34" viewBox="0 0 34 34"><rect x="3" y="8.5" width="25.7" height="15.1" fill="#fff" stroke="#111" stroke-width="1"/><line x1="16.5" y1="8.5" x2="16.5" y2="23.6" stroke="#111" stroke-width="1"/><circle cx="9.8" cy="16.3" r="2.6" fill="none" stroke="#111" stroke-width="1"/><path d="M5.8,16.3 h8 M9.8,12.3 v8" stroke="#111" stroke-width="0.9"/><text x="17.5" y="21.5" font-family="Liberation Sans" font-size="10.5" fill="#111">.1</text><path d="M16.85,13.81 L24.35,5.79 L21.43,3.06 L13.93,11.08 Z" fill="#f2b030" stroke="#8a5a10" stroke-width="0.6"/><path d="M24.35,5.79 L26.06,3.97 L23.14,1.23 L21.43,3.06 Z" fill="#e02a20" stroke="#8a2a10" stroke-width="0.6"/><path d="M13.00,15.00 L16.85,13.81 L13.93,11.08 Z" fill="#f3dcb0" stroke="#7a5a30" stroke-width="0.5"/></svg></div>
<div class="lbtn" style="left:1px;top:651px;width:35px;height:35px;"><svg width="34" height="34" viewBox="0 0 34 34"><defs><pattern id="hp" width="2.6" height="2.6" patternUnits="userSpaceOnUse" patternTransform="rotate(45)"><line x1="0" y1="0" x2="0" y2="2.6" stroke="#444" stroke-width="0.9"/></pattern></defs><path d="M4.7,20 L10,13.5 L28,13.5 L28,25.7 L4.7,25.7 Z" fill="url(#hp)" stroke="#222" stroke-width="1"/><circle cx="16.9" cy="19.2" r="3" fill="#fff" stroke="#222" stroke-width="1"/><path d="M18.58,12.92 L25.46,5.98 L22.62,3.17 L15.74,10.11 Z" fill="#f2b030" stroke="#8a5a10" stroke-width="0.6"/><path d="M25.46,5.98 L27.22,4.21 L24.38,1.39 L22.62,3.17 Z" fill="#e02a20" stroke="#8a2a10" stroke-width="0.6"/><path d="M14.70,14.00 L18.58,12.92 L15.74,10.11 Z" fill="#f3dcb0" stroke="#7a5a30" stroke-width="0.5"/></svg></div>
<div class="lbtn" style="left:1px;top:694px;width:35px;height:35px;"><svg width="34" height="34" viewBox="0 0 34 34"><g stroke="#f0d020" stroke-width="0.9"><path d="M3.5,12.8 h7 M7,9.3 v7 M4.5,10.3 l5,5 M9.5,10.3 l-5,5"/></g><circle cx="7" cy="12.8" r="1.6" fill="#fff8b0"/><path d="M8.5,11 Q11,4 15,4 Q18,4 19.5,8" fill="none" stroke="#777" stroke-width="0.9"/><path d="M16.4,9.6 L22.6,6.6 L30,24 Q30.8,27 28,28.2 Q25.2,29.4 23.8,26.6 Z" fill="#dd5858" stroke="#a83838" stroke-width="0.7"/><ellipse cx="19.5" cy="8.1" rx="3.5" ry="1.8" transform="rotate(-26 19.5 8.1)" fill="#ee8a8a" stroke="#a83838" stroke-width="0.6"/></svg></div>
<div class="lbtn" style="left:1px;top:737px;width:35px;height:35px;"><svg width="34" height="34" viewBox="0 0 34 34"><rect x="4.7" y="17.8" width="6.2" height="6.2" fill="#9a9a9a" stroke="#777" stroke-width="0.7"/><rect x="20.3" y="6.2" width="6.7" height="6" fill="#9a9a9a" stroke="#777" stroke-width="0.7"/><rect x="9.1" y="10" width="13.4" height="10" fill="#f4f0d8" stroke="#888" stroke-width="0.8"/></svg></div>
<div class="lbtn" style="left:36px;top:737px;width:35px;height:35px;"><svg width="34" height="34" viewBox="0 0 34 34"><rect x="4.7" y="17.8" width="6.2" height="6.2" fill="#9a9a9a" stroke="#777" stroke-width="0.7"/><rect x="20.3" y="6.2" width="6.7" height="6" fill="#9a9a9a" stroke="#777" stroke-width="0.7"/><rect x="9.1" y="10" width="13.4" height="10" fill="#f4f0d8" stroke="#888" stroke-width="0.8"/></svg></div>
<div class="lbtn" style="left:1px;top:780px;width:35px;height:35px;"><svg width="34" height="34" viewBox="0 0 34 34"><rect x="6.5" y="4.7" width="17.1" height="5.6" rx="1.8" fill="#f2d468" stroke="#9a8030" stroke-width="0.8"/><path d="M23.6,7.5 L25.5,7.5 L25.5,12.5 L15,12.5 L15,17" fill="none" stroke="#888" stroke-width="1"/></svg></div>
<div class="a" style="left:72px;top:108px;width:1082px;height:24px;background:#d3d3d3"></div>
<svg class="a" style="left:77px;top:113px" width="12" height="12" viewBox="0 0 12 12"><path d="M1.5,1.5 L10.5,10.5 M10.5,1.5 L1.5,10.5" stroke="#555" stroke-width="1"/></svg>
<svg class="a" style="left:95px;top:111px" width="16" height="16" viewBox="0 0 16 16"><circle cx="7.5" cy="7.5" r="6" fill="#f6f6f6" stroke="#243a78" stroke-width="2.2"/><path d="M3.5,7.5 h8 M7.5,3.5 v8" stroke="#c8c8c8" stroke-width="0.6"/><path d="M4,8.5 A4,4 0 0 1 10.5,5" fill="none" stroke="#d87070" stroke-width="0.7"/><path d="M7.5,7.5 L12.5,12.5" stroke="#f0c030" stroke-width="2.4"/><path d="M12,12 L14,14" stroke="#e05050" stroke-width="2"/></svg>
<div class="a" style="left:607px;top:113px;font-size:12.3px;color:#111;white-space:nowrap">* trim.dxf</div>
<div class="a" style="left:72px;top:132px;width:1082px;height:23px;background:#ececec"></div>
<div class="a" style="left:72px;top:155px;width:23px;height:593px;background:#ececec"></div>
<div class="rl" style="left:100px;top:133px;width:40px;text-align:center">-20</div>
<div class="a" style="left:120px;top:148px;width:1px;height:7px;background:#555"></div>
<div class="rl" style="left:150px;top:133px;width:40px;text-align:center">-10</div>
<div class="a" style="left:170px;top:148px;width:1px;height:7px;background:#555"></div>
<div class="rl" style="left:200px;top:133px;width:40px;text-align:center">0</div>
<div class="a" style="left:220px;top:148px;width:1px;height:7px;background:#555"></div>
<div class="rl" style="left:250px;top:133px;width:40px;text-align:center">10</div>
<div class="a" style="left:270px;top:148px;width:1px;height:7px;background:#555"></div>
<div class="rl" style="left:300px;top:133px;width:40px;text-align:center">20</div>
<div class="a" style="left:320px;top:148px;width:1px;height:7px;background:#555"></div>
<div class="rl" style="left:350px;top:133px;width:40px;text-align:center">30</div>
<div class="a" style="left:370px;top:148px;width:1px;height:7px;background:#555"></div>
<div class="rl" style="left:400px;top:133px;width:40px;text-align:center">40</div>
<div class="a" style="left:420px;top:148px;width:1px;height:7px;background:#555"></div>
<div class="rl" style="left:450px;top:133px;width:40px;text-align:center">50</div>
<div class="a" style="left:470px;top:148px;width:1px;height:7px;background:#555"></div>
<div class="rl" style="left:500px;top:133px;width:40px;text-align:center">60</div>
<div class="a" style="left:520px;top:148px;width:1px;height:7px;background:#555"></div>
<div class="rl" style="left:550px;top:133px;width:40px;text-align:center">70</div>
<div class="a" style="left:570px;top:148px;width:1px;height:7px;background:#555"></div>
<div class="rl" style="left:600px;top:133px;width:40px;text-align:center">80</div>
<div class="a" style="left:620px;top:148px;width:1px;height:7px;background:#555"></div>
<div class="rl" style="left:650px;top:133px;width:40px;text-align:center">90</div>
<div class="a" style="left:670px;top:148px;width:1px;height:7px;background:#555"></div>
<div class="rl" style="left:700px;top:133px;width:40px;text-align:center">100</div>
<div class="a" style="left:720px;top:148px;width:1px;height:7px;background:#555"></div>
<div class="rl" style="left:750px;top:133px;width:40px;text-align:center">110</div>
<div class="a" style="left:770px;top:148px;width:1px;height:7px;background:#555"></div>
<div class="rl" style="left:800px;top:133px;width:40px;text-align:center">120</div>
<div class="a" style="left:820px;top:148px;width:1px;height:7px;background:#555"></div>
<div class="rl" style="left:850px;top:133px;width:40px;text-align:center">130</div>
<div class="a" style="left:870px;top:148px;width:1px;height:7px;background:#555"></div>
<div class="rl" style="left:900px;top:133px;width:40px;text-align:center">140</div>
<div class="a" style="left:920px;top:148px;width:1px;height:7px;background:#555"></div>
<div class="rl" style="left:950px;top:133px;width:40px;text-align:center">150</div>
<div class="a" style="left:970px;top:148px;width:1px;height:7px;background:#555"></div>
<div class="rl" style="left:1000px;top:133px;width:40px;text-align:center">160</div>
<div class="a" style="left:1020px;top:148px;width:1px;height:7px;background:#555"></div>
<div class="rl" style="left:1050px;top:133px;width:40px;text-align:center">170</div>
<div class="a" style="left:1070px;top:148px;width:1px;height:7px;background:#555"></div>
<div class="rl" style="left:1100px;top:133px;width:40px;text-align:center">180</div>
<div class="a" style="left:1120px;top:148px;width:1px;height:7px;background:#555"></div>
<svg class="a" style="left:384px;top:144px" width="12" height="8" viewBox="0 0 12 8"><path d="M0,0 L12,0 L6,7 Z" fill="#000"/></svg>
<div class="a" style="left:72px;top:155px;width:23px;height:577px;overflow:hidden">
<div class="rl" style="left:-14px;top:-4px;width:40px;height:12px;line-height:12px;text-align:center;transform:rotate(-90deg)">90</div>
<div class="a" style="left:16px;top:2px;width:7px;height:1px;background:#555"></div>
<div class="rl" style="left:-14px;top:46px;width:40px;height:12px;line-height:12px;text-align:center;transform:rotate(-90deg)">80</div>
<div class="a" style="left:16px;top:52px;width:7px;height:1px;background:#555"></div>
<div class="rl" style="left:-14px;top:96px;width:40px;height:12px;line-height:12px;text-align:center;transform:rotate(-90deg)">70</div>
<div class="a" style="left:16px;top:102px;width:7px;height:1px;background:#555"></div>
<div class="rl" style="left:-14px;top:146px;width:40px;height:12px;line-height:12px;text-align:center;transform:rotate(-90deg)">60</div>
<div class="a" style="left:16px;top:152px;width:7px;height:1px;background:#555"></div>
<div class="rl" style="left:-14px;top:196px;width:40px;height:12px;line-height:12px;text-align:center;transform:rotate(-90deg)">50</div>
<div class="a" style="left:16px;top:202px;width:7px;height:1px;background:#555"></div>
<div class="rl" style="left:-14px;top:246px;width:40px;height:12px;line-height:12px;text-align:center;transform:rotate(-90deg)">40</div>
<div class="a" style="left:16px;top:252px;width:7px;height:1px;background:#555"></div>
<div class="rl" style="left:-14px;top:296px;width:40px;height:12px;line-height:12px;text-align:center;transform:rotate(-90deg)">30</div>
<div class="a" style="left:16px;top:302px;width:7px;height:1px;background:#555"></div>
<div class="rl" style="left:-14px;top:346px;width:40px;height:12px;line-height:12px;text-align:center;transform:rotate(-90deg)">20</div>
<div class="a" style="left:16px;top:352px;width:7px;height:1px;background:#555"></div>
<div class="rl" style="left:-14px;top:396px;width:40px;height:12px;line-height:12px;text-align:center;transform:rotate(-90deg)">10</div>
<div class="a" style="left:16px;top:402px;width:7px;height:1px;background:#555"></div>
<div class="rl" style="left:-14px;top:446px;width:40px;height:12px;line-height:12px;text-align:center;transform:rotate(-90deg)">0</div>
<div class="a" style="left:16px;top:452px;width:7px;height:1px;background:#555"></div>
<div class="rl" style="left:-14px;top:496px;width:40px;height:12px;line-height:12px;text-align:center;transform:rotate(-90deg)">-10</div>
<div class="a" style="left:16px;top:502px;width:7px;height:1px;background:#555"></div>
<div class="rl" style="left:-14px;top:546px;width:40px;height:12px;line-height:12px;text-align:center;transform:rotate(-90deg)">-20</div>
<div class="a" style="left:16px;top:552px;width:7px;height:1px;background:#555"></div>
</div>
<svg class="a" style="left:85px;top:289px" width="8" height="16" viewBox="0 0 8 16"><path d="M0,0 L7,7.5 L0,15 Z" fill="#000"/></svg>
<svg class="a" style="left:95px;top:155px" width="1043" height="577" viewBox="0 0 1043 577"><rect x="0" y="0" width="1043" height="577" fill="#000"/><g stroke="#1a1a1a" stroke-width="1"><line x1="125.5" y1="0" x2="125.5" y2="577"/><line x1="625.5" y1="0" x2="625.5" y2="577"/><line x1="0" y1="452.5" x2="1043" y2="452.5"/></g><path d="M25,2h1v1h-1zM25,52h1v1h-1zM25,102h1v1h-1zM25,152h1v1h-1zM25,202h1v1h-1zM25,252h1v1h-1zM25,302h1v1h-1zM25,352h1v1h-1zM25,402h1v1h-1zM25,452h1v1h-1zM25,502h1v1h-1zM25,552h1v1h-1zM75,2h1v1h-1zM75,52h1v1h-1zM75,102h1v1h-1zM75,152h1v1h-1zM75,202h1v1h-1zM75,252h1v1h-1zM75,302h1v1h-1zM75,352h1v1h-1zM75,402h1v1h-1zM75,452h1v1h-1zM75,502h1v1h-1zM75,552h1v1h-1zM125,2h1v1h-1zM125,52h1v1h-1zM125,102h1v1h-1zM125,152h1v1h-1zM125,202h1v1h-1zM125,252h1v1h-1zM125,302h1v1h-1zM125,352h1v1h-1zM125,402h1v1h-1zM125,452h1v1h-1zM125,502h1v1h-1zM125,552h1v1h-1zM175,2h1v1h-1zM175,52h1v1h-1zM175,102h1v1h-1zM175,152h1v1h-1zM175,202h1v1h-1zM175,252h1v1h-1zM175,302h1v1h-1zM175,352h1v1h-1zM175,402h1v1h-1zM175,452h1v1h-1zM175,502h1v1h-1zM175,552h1v1h-1zM225,2h1v1h-1zM225,52h1v1h-1zM225,102h1v1h-1zM225,152h1v1h-1zM225,202h1v1h-1zM225,252h1v1h-1zM225,302h1v1h-1zM225,352h1v1h-1zM225,402h1v1h-1zM225,452h1v1h-1zM225,502h1v1h-1zM225,552h1v1h-1zM275,2h1v1h-1zM275,52h1v1h-1zM275,102h1v1h-1zM275,152h1v1h-1zM275,202h1v1h-1zM275,252h1v1h-1zM275,302h1v1h-1zM275,352h1v1h-1zM275,402h1v1h-1zM275,452h1v1h-1zM275,502h1v1h-1zM275,552h1v1h-1zM325,2h1v1h-1zM325,52h1v1h-1zM325,102h1v1h-1zM325,152h1v1h-1zM325,202h1v1h-1zM325,252h1v1h-1zM325,302h1v1h-1zM325,352h1v1h-1zM325,402h1v1h-1zM325,452h1v1h-1zM325,502h1v1h-1zM325,552h1v1h-1zM375,2h1v1h-1zM375,52h1v1h-1zM375,102h1v1h-1zM375,152h1v1h-1zM375,202h1v1h-1zM375,252h1v1h-1zM375,302h1v1h-1zM375,352h1v1h-1zM375,402h1v1h-1zM375,452h1v1h-1zM375,502h1v1h-1zM375,552h1v1h-1zM425,2h1v1h-1zM425,52h1v1h-1zM425,102h1v1h-1zM425,152h1v1h-1zM425,202h1v1h-1zM425,252h1v1h-1zM425,302h1v1h-1zM425,352h1v1h-1zM425,402h1v1h-1zM425,452h1v1h-1zM425,502h1v1h-1zM425,552h1v1h-1zM475,2h1v1h-1zM475,52h1v1h-1zM475,102h1v1h-1zM475,152h1v1h-1zM475,202h1v1h-1zM475,252h1v1h-1zM475,302h1v1h-1zM475,352h1v1h-1zM475,402h1v1h-1zM475,452h1v1h-1zM475,502h1v1h-1zM475,552h1v1h-1zM525,2h1v1h-1zM525,52h1v1h-1zM525,102h1v1h-1zM525,152h1v1h-1zM525,202h1v1h-1zM525,252h1v1h-1zM525,302h1v1h-1zM525,352h1v1h-1zM525,402h1v1h-1zM525,452h1v1h-1zM525,502h1v1h-1zM525,552h1v1h-1zM575,2h1v1h-1zM575,52h1v1h-1zM575,102h1v1h-1zM575,152h1v1h-1zM575,202h1v1h-1zM575,252h1v1h-1zM575,302h1v1h-1zM575,352h1v1h-1zM575,402h1v1h-1zM575,452h1v1h-1zM575,502h1v1h-1zM575,552h1v1h-1zM625,2h1v1h-1zM625,52h1v1h-1zM625,102h1v1h-1zM625,152h1v1h-1zM625,202h1v1h-1zM625,252h1v1h-1zM625,302h1v1h-1zM625,352h1v1h-1zM625,402h1v1h-1zM625,452h1v1h-1zM625,502h1v1h-1zM625,552h1v1h-1zM675,2h1v1h-1zM675,52h1v1h-1zM675,102h1v1h-1zM675,152h1v1h-1zM675,202h1v1h-1zM675,252h1v1h-1zM675,302h1v1h-1zM675,352h1v1h-1zM675,402h1v1h-1zM675,452h1v1h-1zM675,502h1v1h-1zM675,552h1v1h-1zM725,2h1v1h-1zM725,52h1v1h-1zM725,102h1v1h-1zM725,152h1v1h-1zM725,202h1v1h-1zM725,252h1v1h-1zM725,302h1v1h-1zM725,352h1v1h-1zM725,402h1v1h-1zM725,452h1v1h-1zM725,502h1v1h-1zM725,552h1v1h-1zM775,2h1v1h-1zM775,52h1v1h-1zM775,102h1v1h-1zM775,152h1v1h-1zM775,202h1v1h-1zM775,252h1v1h-1zM775,302h1v1h-1zM775,352h1v1h-1zM775,402h1v1h-1zM775,452h1v1h-1zM775,502h1v1h-1zM775,552h1v1h-1zM825,2h1v1h-1zM825,52h1v1h-1zM825,102h1v1h-1zM825,152h1v1h-1zM825,202h1v1h-1zM825,252h1v1h-1zM825,302h1v1h-1zM825,352h1v1h-1zM825,402h1v1h-1zM825,452h1v1h-1zM825,502h1v1h-1zM825,552h1v1h-1zM875,2h1v1h-1zM875,52h1v1h-1zM875,102h1v1h-1zM875,152h1v1h-1zM875,202h1v1h-1zM875,252h1v1h-1zM875,302h1v1h-1zM875,352h1v1h-1zM875,402h1v1h-1zM875,452h1v1h-1zM875,502h1v1h-1zM875,552h1v1h-1zM925,2h1v1h-1zM925,52h1v1h-1zM925,102h1v1h-1zM925,152h1v1h-1zM925,202h1v1h-1zM925,252h1v1h-1zM925,302h1v1h-1zM925,352h1v1h-1zM925,402h1v1h-1zM925,452h1v1h-1zM925,502h1v1h-1zM925,552h1v1h-1zM975,2h1v1h-1zM975,52h1v1h-1zM975,102h1v1h-1zM975,152h1v1h-1zM975,202h1v1h-1zM975,252h1v1h-1zM975,302h1v1h-1zM975,352h1v1h-1zM975,402h1v1h-1zM975,452h1v1h-1zM975,502h1v1h-1zM975,552h1v1h-1zM1025,2h1v1h-1zM1025,52h1v1h-1zM1025,102h1v1h-1zM1025,152h1v1h-1zM1025,202h1v1h-1zM1025,252h1v1h-1zM1025,302h1v1h-1zM1025,352h1v1h-1zM1025,402h1v1h-1zM1025,452h1v1h-1zM1025,502h1v1h-1zM1025,552h1v1h-1z" fill="#3a3a3a"/><g stroke="#4e0a0a" stroke-width="2"><line x1="105" y1="452" x2="145" y2="452"/><line x1="125" y1="432" x2="125" y2="472"/></g><line x1="295" y1="94" x2="295" y2="404" stroke="#4e0808" stroke-width="2" stroke-dasharray="5,1.5,1,1.5"/><line x1="795" y1="94" x2="795" y2="422" stroke="#4e0808" stroke-width="2" stroke-dasharray="5,1.5,1,1.5"/><path d="M175,140.75 L175,402 L415,402 L415,140.75 A287.5,287.5 0 0 0 175,140.75" fill="none" stroke="#dedede" stroke-width="1.8"/><path d="M675,140.75 L675,402 L915,402 L915,140.75 A287.5,287.5 0 0 0 675,140.75" fill="none" stroke="#dedede" stroke-width="1.8"/><circle cx="295" cy="402" r="4.8" fill="none" stroke="#8a0c0c" stroke-width="1.1"/><line x1="295" y1="396.5" x2="295" y2="407.5" stroke="#8a0c0c" stroke-width="1.1"/><g stroke="#0c62ae" stroke-width="2"><line x1="675" y1="405" x2="675" y2="458"/><line x1="915" y1="405" x2="915" y2="458"/><line x1="688" y1="452" x2="902" y2="452"/></g><path d="M675,452 L688,448.8 L688,455.2 Z M915,452 L902,448.8 L902,455.2 Z" fill="#18a0ff"/><line x1="795" y1="402" x2="873.3" y2="138.5" stroke="#1a88e8" stroke-width="1.5"/><g transform="translate(877,126) rotate(-73.45)"><path d="M0,0 L-13,-3.3 L-13,3.3 Z" fill="#18a0ff"/></g><g transform="translate(786,436)"><path transform="translate(0,0)" d="M4.2,0 L0,9.5 L8,9.5 M5.5,6.5 L5.5,13" fill="none" stroke="#1a90f0" stroke-width="1.2" stroke-linecap="round"/><path transform="translate(11,0)" d="M3.6,0 A3.1,3.1 0 1 1 3.6,6.2 A3.1,3.1 0 1 1 3.6,0 Z M3.6,6.2 A3.6,3.4 0 1 1 3.6,13 A3.6,3.4 0 1 1 3.6,6.2 Z" fill="none" stroke="#1a90f0" stroke-width="1.2" stroke-linecap="round"/></g><g transform="translate(827.5,261.5) rotate(-73.45) translate(-16.25,-7)"><path transform="translate(0,0)" d="M7,0 L1.4,0 L0.8,5.6 Q2.5,4.6 4.2,4.6 Q7.6,4.8 7.6,8.7 Q7.6,13 3.9,13 Q1.5,13 0.3,11.3" fill="none" stroke="#1a90f0" stroke-width="1.2" stroke-linecap="round"/><path transform="translate(10,0)" d="M0,0 L7.5,0 L2.5,13 M2.8,6.5 L6.2,6.5" fill="none" stroke="#1a90f0" stroke-width="1.2" stroke-linecap="round"/><path transform="translate(18.5,0)" d="M1,12.2 L1.6,12.2" fill="none" stroke="#1a90f0" stroke-width="1.2" stroke-linecap="round"/><path transform="translate(22.5,0)" d="M7,0 L1.4,0 L0.8,5.6 Q2.5,4.6 4.2,4.6 Q7.6,4.8 7.6,8.7 Q7.6,13 3.9,13 Q1.5,13 0.3,11.3" fill="none" stroke="#1a90f0" stroke-width="1.2" stroke-linecap="round"/></g><defs><radialGradient id="ring" cx="0.5" cy="0.5" r="0.5"><stop offset="0.76" stop-color="#000" stop-opacity="0"/><stop offset="0.82" stop-color="#2a3640" stop-opacity="0.4"/><stop offset="0.88" stop-color="#52677a" stop-opacity="0.6"/><stop offset="0.95" stop-color="#7890a4" stop-opacity="0.72"/><stop offset="0.985" stop-color="#6a8092" stop-opacity="0.6"/><stop offset="1" stop-color="#33404a" stop-opacity="0"/></radialGradient></defs><circle cx="295" cy="142" r="39" fill="url(#ring)"/><g fill="none" stroke="#0a0e12" stroke-opacity="0.35" stroke-width="0.6"><circle cx="295" cy="142" r="36.2"/><circle cx="295" cy="142" r="34"/></g><g stroke="#b9b9b9" stroke-width="4"><line x1="279.5" y1="142" x2="310.5" y2="142"/><line x1="295" y1="126.5" x2="295" y2="157.5"/></g><circle cx="295" cy="142" r="1.8" fill="#000"/></svg>
<div class="a" style="left:1138px;top:155px;width:16px;height:577px;background:#f6f6f6"></div>
<div class="a" style="left:1143px;top:309px;width:8px;height:281px;border-radius:4px;background:#878787"></div>
<div class="a" style="left:95px;top:732px;width:987px;height:16px;background:#f6f6f6"></div>
<div class="a" style="left:242px;top:736px;width:664px;height:9px;border-radius:4.5px;background:#878787"></div>
<div class="a" style="left:1082px;top:732px;width:72px;height:16px;background:#e7e7e7"></div>
<div class="a" style="left:1082px;top:733px;width:71px;text-align:right;font-size:12.5px;color:#111;white-space:nowrap">10 &lt; 100</div>
<div class="a" style="left:72px;top:748px;width:1082px;height:23px;background:#fff;border-top:1px solid #c4c4c4;border-bottom:1px solid #c4c4c4"></div>
<div class="a" style="left:77px;top:751px;font-size:13.5px;color:#1010e0;white-space:nowrap"><i>Opdracht:</i> lengthen</div>
<div class="a" style="left:72px;top:771px;width:1082px;height:28px;background:#ececec"></div>
<div class="a" style="left:73px;top:778px;font-size:13.5px;color:#000;white-space:nowrap">Lijn of book kiezen:</div>
<div class="a" style="left:192px;top:776px;width:934px;height:18px;background:#fff"></div>
<div class="a" style="left:1127px;top:772px;width:26px;height:26px;border:1px solid #b0b0b0;background:linear-gradient(#f4f4f4,#e4e4e4)"></div>
<svg class="a" style="left:1130px;top:776px" width="20" height="18" viewBox="0 0 20 18"><rect x="2.5" y="3.5" width="15" height="11" fill="#fff" stroke="#111" stroke-width="1.2"/><rect x="2.5" y="3.5" width="15" height="3" fill="#111"/></svg>
<div class="a" style="left:0;top:798px;width:1500px;height:46px;background:#dcdcdc"></div>
<div class="st" style="left:2px;top:807px">34,62</div>
<div class="st" style="left:2px;top:827px">@0,52</div>
<div class="a" style="left:253px;top:802px;width:1px;height:40px;background:#9a9a9a"></div>
<div class="st" style="left:256px;top:807px">70.7107&lt;61°</div>
<div class="st" style="left:256px;top:827px">@52&lt;90°</div>
<div class="a" style="left:507px;top:819px;width:5px;height:5px;border-radius:3px;background:#c4c4c4"></div>
<div class="st" style="left:613px;top:817px">Lijn of book kiezen</div>
<svg class="a" style="left:716px;top:805px" width="20" height="32" viewBox="0 0 20 32"><rect x="1.5" y="1" width="17" height="30" rx="8.5" fill="#fff" stroke="#333" stroke-width="1"/><path d="M1.5,14 Q10,11.5 18.5,14" fill="none" stroke="#333" stroke-width="1"/><line x1="10" y1="1" x2="10" y2="12.8" stroke="#333" stroke-width="1"/><rect x="8.3" y="3.5" width="3.4" height="7" rx="1.7" fill="#fff" stroke="#333" stroke-width="0.9"/></svg>
<div class="st" style="left:754px;top:817px">Annuleer</div>
<div class="a" style="left:940px;top:819px;width:5px;height:5px;border-radius:3px;background:#c4c4c4"></div>
<div class="st" style="left:949px;top:817px">Geen objecten geselecteerd.</div>
<div class="a" style="left:1269px;top:819px;width:5px;height:5px;border-radius:3px;background:#c4c4c4"></div>
<div class="a" style="left:1154px;top:108px;width:301px;height:691px;background:#ececec"></div>
<div class="a" style="left:1154px;top:108px;width:301px;height:21px;background:linear-gradient(#ededed,#dedede);border-bottom:1px solid #c8c8c8"></div>
<svg class="a" style="left:1156px;top:110px" width="16" height="16" viewBox="0 0 16 16"><circle cx="8" cy="8" r="7" fill="#6a6a6a"/><path d="M5,5 L11,11 M11,5 L5,11" stroke="#eee" stroke-width="1.8"/></svg>
<svg class="a" style="left:1174px;top:110px" width="16" height="16" viewBox="0 0 16 16"><circle cx="8" cy="8" r="7" fill="#6a6a6a"/><rect x="4.5" y="7" width="5" height="4" fill="none" stroke="#eee" stroke-width="1.1"/><path d="M6.5,7 V5 H11.5 V9 H9.5" fill="none" stroke="#eee" stroke-width="1.1"/></svg>
<div class="a" style="left:1297px;top:112px;font-size:12.2px;color:#222;white-space:nowrap">Lagenlijst</div>
<div class="a" style="left:1155px;top:130px;width:299px;height:27px;background:#b4b4b4"></div>
<div class="a" style="left:1156px;top:131px;width:59px;height:25px;background:linear-gradient(#f0f0f0,#f6f6f6)"></div>
<div class="a" style="left:1216px;top:131px;width:59px;height:25px;background:linear-gradient(#f0f0f0,#f6f6f6)"></div>
<div class="a" style="left:1276px;top:131px;width:59px;height:25px;background:linear-gradient(#f0f0f0,#f6f6f6)"></div>
<div class="a" style="left:1336px;top:131px;width:59px;height:25px;background:linear-gradient(#f0f0f0,#f6f6f6)"></div>
<div class="a" style="left:1396px;top:131px;width:58px;height:25px;background:linear-gradient(#f0f0f0,#f6f6f6)"></div>
<svg class="a" style="left:1177px;top:136px" width="16" height="14" viewBox="0 0 16 14"><path d="M0.5,7 Q8,-2.8 15.5,7 Q8,16.8 0.5,7 Z" fill="#000"/><path d="M3.2,7 Q8,1.8 12.8,7 Q8,12.2 3.2,7 Z" fill="#fff"/><circle cx="8" cy="7" r="3.1" fill="#000"/><circle cx="8.8" cy="5.8" r="0.8" fill="#fff"/></svg>
<svg class="a" style="left:1237px;top:136px" width="16" height="14" viewBox="0 0 16 14"><path d="M0.5,7 Q8,-2.8 15.5,7 Q8,16.8 0.5,7 Z" fill="#9a9a9a"/><path d="M3.2,7 Q8,1.8 12.8,7 Q8,12.2 3.2,7 Z" fill="#f3f3f3"/><circle cx="8" cy="7" r="3.1" fill="#9a9a9a"/><circle cx="8.8" cy="5.8" r="0.8" fill="#f3f3f3"/></svg>
<svg class="a" style="left:1297px;top:135px" width="16" height="16" viewBox="0 0 16 16"><path d="M8,2 V14 M2,8 H14" stroke="#e00000" stroke-width="3.2"/></svg>
<svg class="a" style="left:1357px;top:135px" width="16" height="16" viewBox="0 0 16 16"><path d="M2,8 H14" stroke="#e00000" stroke-width="3.2"/></svg>
<svg class="a" style="left:1416px;top:134px" width="18" height="18" viewBox="0 0 18 18"><path d="M2,16 L3.5,11.5 L13.5,1.5 Q15,0.5 16,1.5 Q17,2.5 16,4 L6,14 Z" fill="#f0b830" stroke="#8a5a10" stroke-width="0.7"/><path d="M13.5,1.5 L16,4" stroke="#e02020" stroke-width="2.2"/><path d="M2,16 L2.8,13.5 L4.5,15 Z" fill="#333"/></svg>
<div class="a" style="left:1155px;top:157px;width:299px;height:642px;background:#fff;border-left:1px solid #c8c8c8"></div>
<div class="a" style="left:1161px;top:163px;width:16px;height:9px;background:#fff;border:1.2px solid #111"></div>
<div class="lr" style="left:1183px;top:159px;color:#111">0</div>
<svg class="a" style="left:1414px;top:160px" width="16" height="14" viewBox="0 0 16 14"><path d="M0.5,7 Q8,-2.8 15.5,7 Q8,16.8 0.5,7 Z" fill="#000"/><path d="M3.2,7 Q8,1.8 12.8,7 Q8,12.2 3.2,7 Z" fill="#fff"/><circle cx="8" cy="7" r="3.1" fill="#000"/><circle cx="8.8" cy="5.8" r="0.8" fill="#fff"/></svg>
<svg class="a" style="left:1437px;top:159px" width="16" height="17" viewBox="0 0 16 17"><path d="M4,8 V5.5 A4,4 0 0 1 12,5.5 V8" fill="none" stroke="#c4c4c4" stroke-width="1.6"/><rect x="2.5" y="8" width="11" height="8" rx="0.8" fill="#c4c4c4"/></svg>
<div class="a" style="left:1161px;top:183px;width:16px;height:9px;background:#1b8cf4;border:1.2px solid #111"></div>
<div class="lr" style="left:1183px;top:179px;color:#111">Afmetingen</div>
<svg class="a" style="left:1414px;top:180px" width="16" height="14" viewBox="0 0 16 14"><path d="M0.5,7 Q8,-2.8 15.5,7 Q8,16.8 0.5,7 Z" fill="#000"/><path d="M3.2,7 Q8,1.8 12.8,7 Q8,12.2 3.2,7 Z" fill="#fff"/><circle cx="8" cy="7" r="3.1" fill="#000"/><circle cx="8.8" cy="5.8" r="0.8" fill="#fff"/></svg>
<svg class="a" style="left:1437px;top:179px" width="16" height="17" viewBox="0 0 16 17"><path d="M4,8 V5.5 A4,4 0 0 1 12,5.5 V8" fill="none" stroke="#c4c4c4" stroke-width="1.6"/><rect x="2.5" y="8" width="11" height="8" rx="0.8" fill="#c4c4c4"/></svg>
<div class="a" style="left:1161px;top:203px;width:16px;height:9px;background:#ee0000;border:1.2px solid #111"></div>
<div class="lr" style="left:1183px;top:199px;color:#111">Centrum</div>
<svg class="a" style="left:1414px;top:200px" width="16" height="14" viewBox="0 0 16 14"><path d="M0.5,7 Q8,-2.8 15.5,7 Q8,16.8 0.5,7 Z" fill="#000"/><path d="M3.2,7 Q8,1.8 12.8,7 Q8,12.2 3.2,7 Z" fill="#fff"/><circle cx="8" cy="7" r="3.1" fill="#000"/><circle cx="8.8" cy="5.8" r="0.8" fill="#fff"/></svg>
<svg class="a" style="left:1437px;top:199px" width="16" height="17" viewBox="0 0 16 17"><path d="M4,8 V5.5 A4,4 0 0 1 12,5.5 V8" fill="none" stroke="#c4c4c4" stroke-width="1.6"/><rect x="2.5" y="8" width="11" height="8" rx="0.8" fill="#c4c4c4"/></svg>
<div class="a" style="left:1161px;top:223px;width:16px;height:9px;background:#fff;border:1.2px solid #111"></div>
<div class="lr" style="left:1183px;top:219px;color:#111">Defpoints</div>
<svg class="a" style="left:1414px;top:220px" width="16" height="14" viewBox="0 0 16 14"><path d="M0.5,7 Q8,-2.8 15.5,7 Q8,16.8 0.5,7 Z" fill="#000"/><path d="M3.2,7 Q8,1.8 12.8,7 Q8,12.2 3.2,7 Z" fill="#fff"/><circle cx="8" cy="7" r="3.1" fill="#000"/><circle cx="8.8" cy="5.8" r="0.8" fill="#fff"/></svg>
<svg class="a" style="left:1437px;top:219px" width="16" height="17" viewBox="0 0 16 17"><path d="M4,8 V5.5 A4,4 0 0 1 12,5.5 V8" fill="none" stroke="#c4c4c4" stroke-width="1.6"/><rect x="2.5" y="8" width="11" height="8" rx="0.8" fill="#c4c4c4"/></svg>
<div class="a" style="left:1156px;top:237px;width:298px;height:20px;background:#0b4ed6"></div>
<div class="a" style="left:1161px;top:243px;width:16px;height:9px;background:#3a4350;border:1.2px solid #2a3040"></div>
<div class="lr" style="left:1183px;top:239px;color:#fff">Zichtbaar</div>
<svg class="a" style="left:1414px;top:240px" width="16" height="14" viewBox="0 0 16 14"><path d="M0.5,7 Q8,-2.8 15.5,7 Q8,16.8 0.5,7 Z" fill="#2a3a5a"/><path d="M3.2,7 Q8,1.8 12.8,7 Q8,12.2 3.2,7 Z" fill="#0b4ed6"/><circle cx="8" cy="7" r="3.1" fill="#2a3a5a"/><circle cx="8.8" cy="5.8" r="0.8" fill="#0b4ed6"/></svg>
<svg class="a" style="left:1437px;top:239px" width="16" height="17" viewBox="0 0 16 17"><path d="M4,8 V5.5 A4,4 0 0 1 12,5.5 V8" fill="none" stroke="#9aaacc" stroke-width="1.6"/><rect x="2.5" y="8" width="11" height="8" rx="0.8" fill="#9aaacc"/></svg>
<svg class="a" style="left:1393px;top:239px" width="16" height="16" viewBox="0 0 16 16"><path d="M1.5,14.5 L3,10.5 L12,1.5 Q13.2,0.6 14.2,1.6 Q15.2,2.6 14.2,3.8 L5.2,12.8 Z" fill="#e0a040" stroke="#7a5020" stroke-width="0.6"/><path d="M1.5,14.5 L2.2,12.2 L3.8,13.8 Z" fill="#444"/></svg>
<div class="a" style="left:1455px;top:108px;width:45px;height:691px;background:linear-gradient(90deg,#e4e4e4,#dadada 30px,#c4c4c4)"></div>
<div class="a" style="left:1462px;top:116px;width:2px;height:2px;border-radius:1px;background:#9a9a9a"></div>
<div class="a" style="left:1468px;top:116px;width:2px;height:2px;border-radius:1px;background:#9a9a9a"></div>
<div class="a" style="left:1474px;top:116px;width:2px;height:2px;border-radius:1px;background:#9a9a9a"></div>
<div class="a" style="left:1480px;top:116px;width:2px;height:2px;border-radius:1px;background:#9a9a9a"></div>
<div class="a" style="left:1486px;top:116px;width:2px;height:2px;border-radius:1px;background:#9a9a9a"></div>
<div class="a" style="left:1492px;top:116px;width:2px;height:2px;border-radius:1px;background:#9a9a9a"></div>
<div class="a" style="left:1458px;top:261px;width:38px;height:1px;background:repeating-linear-gradient(90deg,#888 0 1px,transparent 1px 3px)"></div>
<div class="a" style="left:1458px;top:409px;width:38px;height:1px;background:repeating-linear-gradient(90deg,#888 0 1px,transparent 1px 3px)"></div>
<div class="a" style="left:1456px;top:120px;width:42px;height:43px;border-radius:6px;background:#b6b6b6"></div>
<div class="a" style="left:1456px;top:417px;width:42px;height:43px;border-radius:6px;background:#b6b6b6"></div>
<svg class="a" style="left:1463px;top:127px" width="28" height="29" viewBox="0 0 28 29"><rect x="0.5" y="0.5" width="27" height="27.5" fill="#fff" stroke="#222" stroke-width="1"/><rect x="0.5" y="0.5" width="27" height="4" fill="#000"/><rect x="1.5" y="1.2" width="3" height="2.6" fill="#fff"/><path d="M9,12 L16,9 L16,21 L9,24 Z" fill="#999" stroke="#555" stroke-width="0.7"/><path d="M12,11 L21,8 L21,20 L12,23 Z" fill="#f4f4f4" stroke="#666" stroke-width="0.7"/><path d="M14,20 L19,13 L19,19 Z" fill="none" stroke="#e04040" stroke-width="0.8"/></svg>
<svg class="a" style="left:1463px;top:174px" width="28" height="29" viewBox="0 0 28 29"><rect x="0.5" y="0.5" width="27" height="27.5" fill="#fff" stroke="#222" stroke-width="1"/><rect x="0.5" y="0.5" width="27" height="4" fill="#000"/><rect x="1.5" y="1.2" width="3" height="2.6" fill="#fff"/><rect x="7" y="9" width="11" height="9" fill="#f4eecc" stroke="#777" stroke-width="0.8"/><circle cx="18" cy="18" r="5" fill="#f4eecc" stroke="#777" stroke-width="0.8"/></svg>
<svg class="a" style="left:1463px;top:220px" width="28" height="29" viewBox="0 0 28 29"><rect x="0.5" y="0.5" width="27" height="27.5" fill="#fff" stroke="#222" stroke-width="1"/><rect x="0.5" y="0.5" width="27" height="4" fill="#000"/><rect x="1.5" y="1.2" width="3" height="2.6" fill="#fff"/><rect x="5.5" y="10.5" width="17" height="12" rx="2" fill="#f6f6f6" stroke="#c8d4ec" stroke-width="1"/></svg>
<svg class="a" style="left:1463px;top:276px" width="28" height="29" viewBox="0 0 28 29"><rect x="0.5" y="0.5" width="27" height="27.5" fill="#fff" stroke="#222" stroke-width="1"/><rect x="0.5" y="0.5" width="27" height="4" fill="#000"/><rect x="1.5" y="1.2" width="3" height="2.6" fill="#fff"/><g fill="#111"><rect x="4" y="9" width="4" height="3"/><rect x="4" y="15" width="4" height="3"/><rect x="4" y="21" width="4" height="3"/></g><g fill="none" stroke="#222" stroke-width="0.8"><rect x="10.5" y="9" width="13" height="3"/><rect x="10.5" y="15" width="13" height="3"/><rect x="10.5" y="21" width="13" height="3"/></g></svg>
<svg class="a" style="left:1463px;top:322px" width="28" height="29" viewBox="0 0 28 29"><rect x="0.5" y="0.5" width="27" height="27.5" fill="#fff" stroke="#222" stroke-width="1"/><rect x="0.5" y="0.5" width="27" height="4" fill="#000"/><rect x="1.5" y="1.2" width="3" height="2.6" fill="#fff"/><path d="M6,9 L22,9 L15.5,16 L15.5,23 L12.5,23 L12.5,16 Z" fill="#ddd" stroke="#444" stroke-width="0.8"/></svg>
<svg class="a" style="left:1463px;top:368px" width="28" height="29" viewBox="0 0 28 29"><rect x="0.5" y="0.5" width="27" height="27.5" fill="#fff" stroke="#222" stroke-width="1"/><rect x="0.5" y="0.5" width="27" height="4" fill="#000"/><rect x="1.5" y="1.2" width="3" height="2.6" fill="#fff"/><path d="M6,10 L12,15 L12,21 L6,25 Z" fill="#fff" stroke="#333" stroke-width="0.8"/><rect x="12" y="14" width="10" height="8" fill="#ccc" stroke="#555" stroke-width="0.6"/><line x1="4" y1="18" x2="25" y2="18" stroke="#f08080" stroke-width="0.8" stroke-dasharray="1.5,1"/></svg>
<svg class="a" style="left:1463px;top:424px" width="28" height="29" viewBox="0 0 28 29"><rect x="0.5" y="0.5" width="27" height="27.5" fill="#fff" stroke="#222" stroke-width="1"/><rect x="0.5" y="0.5" width="27" height="4" fill="#000"/><rect x="1.5" y="1.2" width="3" height="2.6" fill="#fff"/><g stroke="#888" stroke-width="0.7"><path d="M3,9 h9 M3,12 h11 M3,15 h9 M3,18 h11"/></g><rect x="1" y="23" width="26" height="4.5" fill="#fff" stroke="#444" stroke-width="0.6"/><path d="M11,25 h12" stroke="#333" stroke-width="0.9"/></svg>
<svg class="a" style="left:1463px;top:471px" width="28" height="29" viewBox="0 0 28 29"><rect x="0.5" y="0.5" width="27" height="27.5" fill="#fff" stroke="#222" stroke-width="1"/><rect x="0.5" y="0.5" width="27" height="4" fill="#000"/><rect x="1.5" y="1.2" width="3" height="2.6" fill="#fff"/><rect x="8" y="9" width="13" height="16" rx="1" fill="#c48a3e" stroke="#8a5a1e" stroke-width="0.7"/><rect x="10" y="11" width="9" height="12" fill="#eee"/><rect x="11.5" y="7.5" width="6" height="3" fill="#999"/></svg>
</div></body></html>
